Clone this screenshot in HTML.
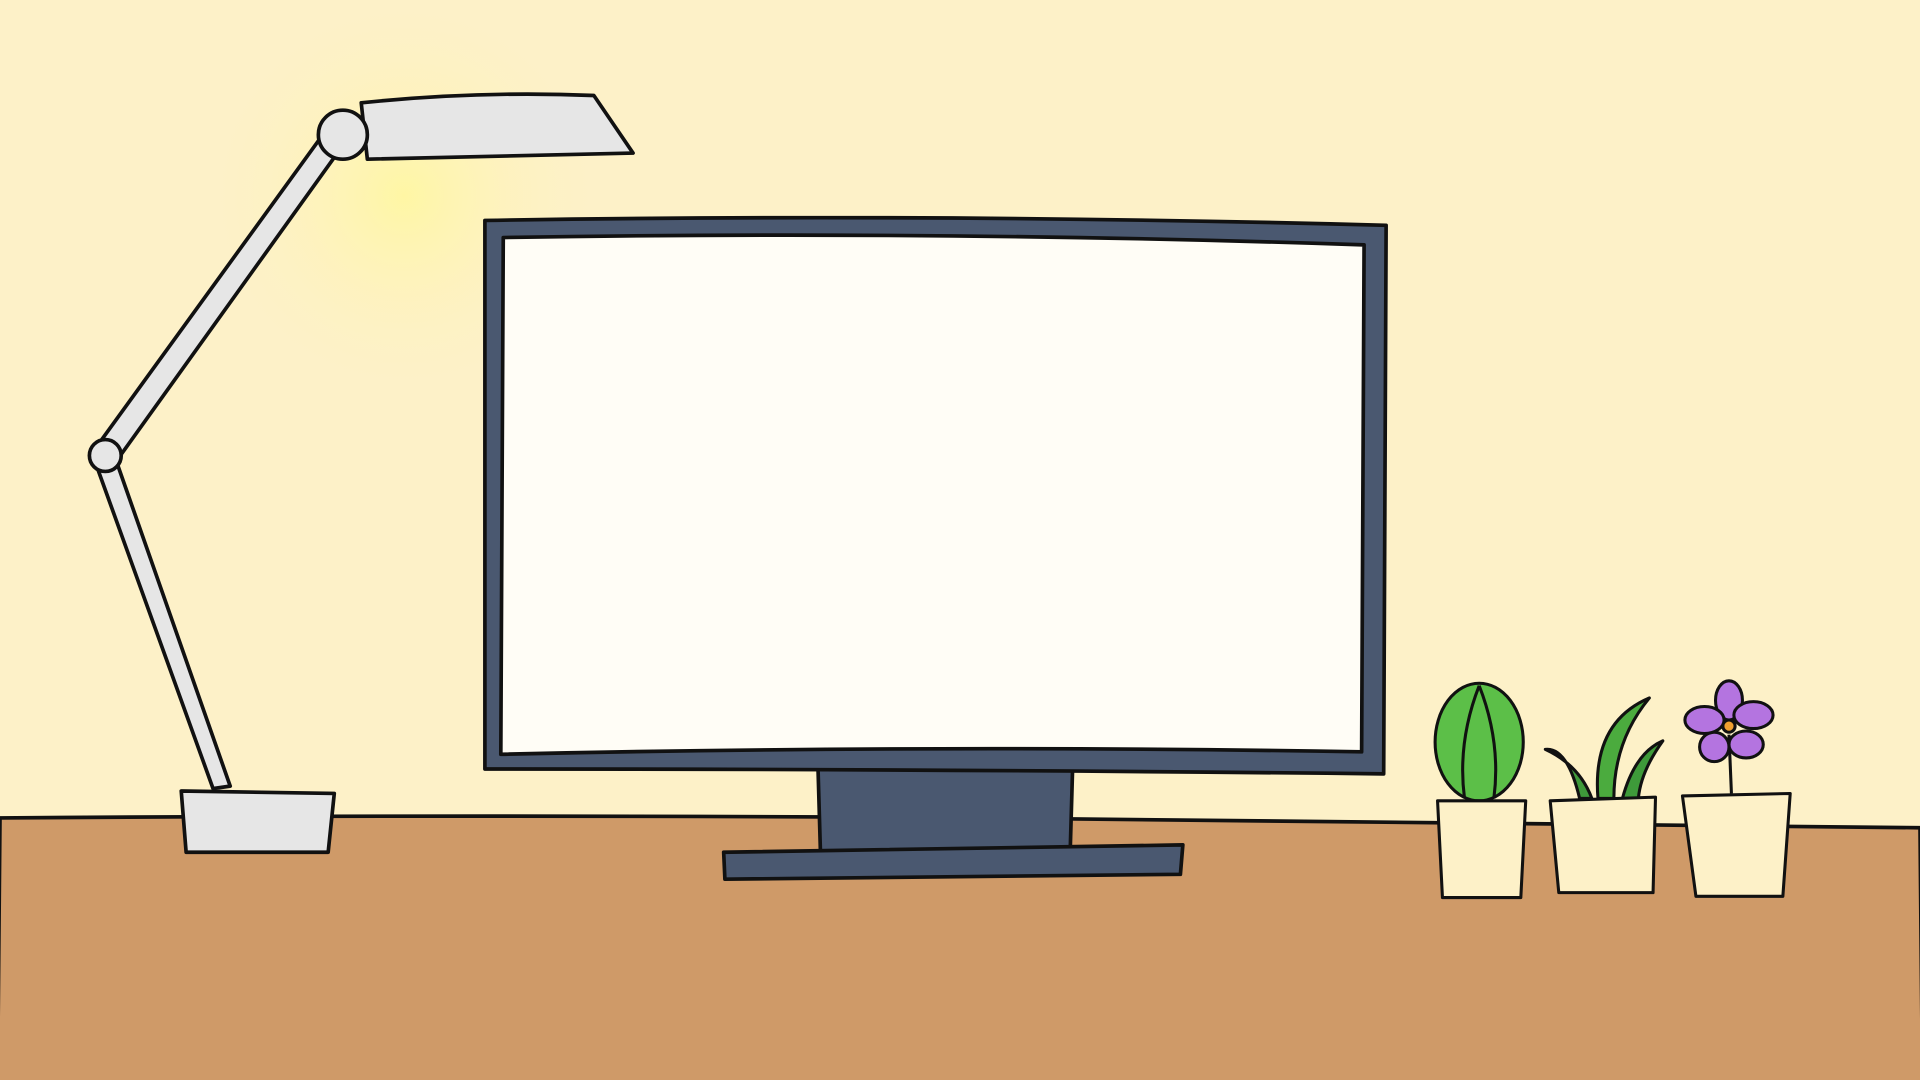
<!DOCTYPE html>
<html><head><meta charset="utf-8"><style>html,body{margin:0;padding:0;overflow:hidden;background:#fdf1c8}svg{display:block}</style></head>
<body>
<svg width="1920" height="1080" viewBox="0 0 1568 882" xmlns="http://www.w3.org/2000/svg">
<defs>
<radialGradient id="glow" cx="330" cy="160" r="170" gradientUnits="userSpaceOnUse">
<stop offset="0" stop-color="#fff7a0" stop-opacity="0.9"/>
<stop offset="1" stop-color="#fdf1c8" stop-opacity="0"/>
</radialGradient>
</defs>
<rect width="1568" height="882" fill="#fdf1c8"/>
<rect width="1568" height="882" fill="url(#glow)"/>
<path d="M0 668 Q400 665 800 668 T1568 676 L1570 884 L-2 884 Z" fill="#cf9a68" stroke="#111" stroke-width="3"/>
<g stroke="#111" stroke-width="3" stroke-linejoin="round" fill="#e6e6e6">
<path d="M148 646 L273 648 L268 696 L152 696 Z"/>
<path d="M78 378 L92 368 L188 642 L174 644 Z"/>
<path d="M78 366 L268 104 L282 116 L94 378 Z"/>
<circle cx="86" cy="372" r="13"/>
<path d="M295 84 Q390 74 485 78 L517 125 Q400 128 300 130 Z"/>
<circle cx="280" cy="110" r="20"/>
</g>
<g stroke="#111" stroke-width="3" stroke-linejoin="round">
<path d="M668 626 L876 626 L874 695 L670 695 Z" fill="#4a5870"/>
<path d="M591 696 L966 690 L964 714 L592 718 Z" fill="#4a5870"/>
<path d="M396 180 Q760 174 1132 184 L1130 632 Q760 628 396 628 Z" fill="#4a5870"/>
<path d="M411 194 Q760 188 1114 200 L1112 614 Q760 608 409 616 Z" fill="#fffdf6"/>
</g>
<g stroke="#111" stroke-width="2.5" stroke-linejoin="round">
<ellipse cx="1208" cy="606" rx="36" ry="48" fill="#5cbf48"/>
<path d="M1208 560 Q1190 606 1196 652 M1208 560 Q1226 606 1220 652" fill="none"/>
<path d="M1174 654 L1246 654 L1242 733 L1178 733 Z" fill="#fdf1c8"/>
<path d="M1290 652 Q1280 610 1262 612 Q1290 625 1300 652 Z" fill="#3e9a3a"/>
<path d="M1305 652 Q1300 590 1347 570 Q1318 605 1318 652 Z" fill="#4bab3e"/>
<path d="M1325 652 Q1335 615 1358 605 Q1340 630 1338 652 Z" fill="#3e9a3a"/>
<path d="M1266 654 L1352 651 L1350 729 L1273 729 Z" fill="#fdf1c8"/>
<path d="M1412 600 L1414 648" fill="none"/>
<g fill="#b474e0">
<ellipse cx="1412" cy="572" rx="11" ry="16"/>
<ellipse cx="1432" cy="584" rx="16" ry="11"/>
<ellipse cx="1426" cy="608" rx="14" ry="11"/>
<ellipse cx="1400" cy="610" rx="12" ry="12"/>
<ellipse cx="1392" cy="588" rx="16" ry="11"/>
</g>
<circle cx="1412" cy="593" r="5" fill="#f0a030"/>
<path d="M1374 650 L1462 648 L1456 732 L1385 732 Z" fill="#fdf1c8"/>
</g>
</svg>
</body></html>
